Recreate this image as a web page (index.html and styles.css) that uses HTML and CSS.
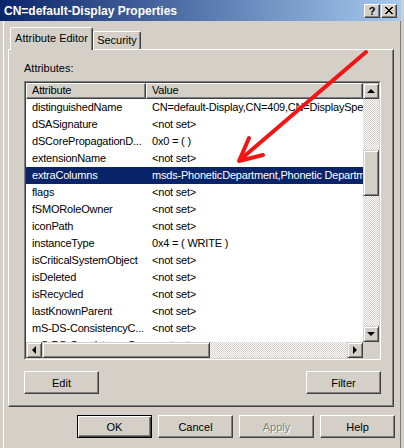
FILE: index.html
```html
<!DOCTYPE html>
<html lang="en">
  <head>
    <meta charset="UTF-8" />
    <title>CN=default-Display Properties</title>
    <link rel="stylesheet" href="styles.css">
  </head>
  <body>
    <div class="window">
      <div class="titlebar">
        <span class="title">CN=default-Display Properties</span>
        <div class="title-buttons">
          <div class="tbtn">?</div>
          <div class="tbtn">
            <svg width="8" height="7" viewBox="0 0 8 7" shape-rendering="crispEdges">
              <path d="M0 0h2v1h-2zM6 0h2v1h-2zM1 1h2v1h-2zM5 1h2v1h-2zM2 2h4v1h-4zM3 3h2v1h-2zM2 4h4v1h-4zM1 5h2v1h-2zM5 5h2v1h-2zM0 6h2v1h-2zM6 6h2v1h-2z" fill="#000"/>
            </svg>
          </div>
        </div>
      </div>
      <div class="body">
        <div class="tabs">
          <div class="tab active">Attribute Editor</div>
          <div class="tab">Security</div>
        </div>
        <div class="panel">
          <div class="label">Attributes:</div>
          <div class="listbox">
            <div class="listbox-inner">
              <div class="list">
                <div class="list-header">
                  <div class="hcell attr">Attribute</div>
                  <div class="hcell val">Value</div>
                </div>
                <div class="row"><div class="attr">distinguishedName</div><div class="val">CN=default-Display,CN=409,CN=DisplaySpecifiers,CN=Configuration</div></div>
                <div class="row"><div class="attr">dSASignature</div><div class="val">&lt;not set&gt;</div></div>
                <div class="row"><div class="attr">dSCorePropagationD...</div><div class="val">0x0 = ( )</div></div>
                <div class="row"><div class="attr">extensionName</div><div class="val">&lt;not set&gt;</div></div>
                <div class="row selected"><div class="attr">extraColumns</div><div class="val">msds-PhoneticDepartment,Phonetic Department,1,100,0</div></div>
                <div class="row"><div class="attr">flags</div><div class="val">&lt;not set&gt;</div></div>
                <div class="row"><div class="attr">fSMORoleOwner</div><div class="val">&lt;not set&gt;</div></div>
                <div class="row"><div class="attr">iconPath</div><div class="val">&lt;not set&gt;</div></div>
                <div class="row"><div class="attr">instanceType</div><div class="val">0x4 = ( WRITE )</div></div>
                <div class="row"><div class="attr">isCriticalSystemObject</div><div class="val">&lt;not set&gt;</div></div>
                <div class="row"><div class="attr">isDeleted</div><div class="val">&lt;not set&gt;</div></div>
                <div class="row"><div class="attr">isRecycled</div><div class="val">&lt;not set&gt;</div></div>
                <div class="row"><div class="attr">lastKnownParent</div><div class="val">&lt;not set&gt;</div></div>
                <div class="row"><div class="attr">mS-DS-ConsistencyC...</div><div class="val">&lt;not set&gt;</div></div>
                <div class="row"><div class="attr">mS-DS-ConsistencyG...</div><div class="val">&lt;not set&gt;</div></div>
              </div>
              <div class="vscroll">
                <div class="sbtn"><span class="arrow up"></span></div>
                <div class="track track-top"></div>
                <div class="thumb"></div>
                <div class="track track-rest"></div>
                <div class="sbtn"><span class="arrow down"></span></div>
              </div>
              <div class="hscroll">
                <div class="sbtn"><span class="arrow left"></span></div>
                <div class="thumb hthumb"></div>
                <div class="track track-rest"></div>
                <div class="sbtn"><span class="arrow right"></span></div>
              </div>
              <div class="corner"></div>
            </div>
          </div>
          <div class="panel-buttons">
            <div class="btn">Edit</div>
            <div class="btn">Filter</div>
          </div>
        </div>
        <div class="dialog-buttons">
          <div class="btn default">OK</div>
          <div class="btn">Cancel</div>
          <div class="btn disabled">Apply</div>
          <div class="btn">Help</div>
        </div>
      </div>
      <svg class="annotation" width="404" height="448" viewBox="0 0 404 448">
        <g stroke="#f31414" stroke-width="4" stroke-linecap="round" stroke-linejoin="round" fill="none">
          <path d="M366 52 L241 159"/>
          <path d="M249 138 L239 161 L263 155"/>
        </g>
      </svg>
    </div>
  </body>
</html>
```

FILE: styles.css
```css
* {
  box-sizing: border-box;
}
body {
  margin: 0;
  font-family: "Liberation Sans", Arial, sans-serif;
  font-size: 11px;
  color: #000;
  background: #d4d0c8;
}
.window {
  position: relative;
  width: 404px;
  height: 448px;
  overflow: hidden;
  background: #d4d0c8;
  box-shadow: inset 3px 0 #d4d0c8, inset 4px 0 #fff, inset -3px 0 #d4d0c8, inset -4px 0 #808080;
}
.titlebar {
  width: 401px;
  height: 21px;
  display: flex;
  align-items: center;
  justify-content: space-between;
  padding: 0 4px 0 4px;
  background: linear-gradient(to right, #0a246a, #a6caf0);
}
.title {
  color: #fff;
  font-weight: bold;
  font-size: 12px;
}
.title-buttons {
  display: flex;
  gap: 1px;
}
.tbtn {
  width: 16px;
  height: 14px;
  display: flex;
  align-items: center;
  justify-content: center;
  background: #d4d0c8;
  border: 1px solid;
  border-color: #fff #404040 #404040 #fff;
  box-shadow: inset -1px -1px #808080;
  font-weight: bold;
  font-size: 11px;
  line-height: 12px;
}
.body {
  padding: 6px 0 0 8px;
}
.tabs {
  position: relative;
  z-index: 1;
  display: flex;
  align-items: flex-start;
  height: 23px;
  margin-bottom: -1px;
  padding-left: 2px;
}
.tab {
  width: 48px;
  height: 18px;
  margin-top: 4px;
  text-align: center;
  line-height: 16px;
  background: #d4d0c8;
  border-top: 1px solid #fff;
  border-left: 1px solid #fff;
  border-right: 1px solid #404040;
  box-shadow: inset -1px 0 #808080;
  border-top-left-radius: 2px;
  border-top-right-radius: 2px;
}
.tab.active {
  width: 83px;
  height: 23px;
  margin-top: 0;
  line-height: 20px;
}
.panel {
  width: 386px;
  height: 358px;
  padding: 12px 0 0 15px;
  border: 1px solid;
  border-color: #fff #404040 #404040 #fff;
  box-shadow: inset -1px -1px #808080;
}
.label {
  line-height: 13px;
}
.listbox {
  width: 357px;
  height: 279px;
  margin-top: 6px;
  border: 1px solid;
  border-color: #808080 #fff #fff #808080;
}
.listbox-inner {
  height: 100%;
  border: 1px solid;
  border-color: #404040 #d4d0c8 #d4d0c8 #404040;
  display: grid;
  grid-template-columns: 1fr 16px;
  grid-template-rows: 1fr 16px;
}
.list {
  background: #fff;
  overflow: hidden;
  letter-spacing: -0.2px;
}
.list-header {
  display: flex;
  height: 16px;
}
.hcell {
  background: #d4d0c8;
  border: 1px solid;
  border-color: #fff #404040 #404040 #fff;
  box-shadow: inset -1px -1px #808080;
  padding-left: 5px;
  line-height: 13px;
}
.hcell.attr {
  width: 120px;
  flex: none;
}
.hcell.val {
  flex: 1;
}
.row {
  display: flex;
  height: 17px;
  line-height: 17px;
  white-space: nowrap;
}
.row .attr {
  width: 120px;
  flex: none;
  padding-left: 6px;
  overflow: hidden;
}
.row .val {
  padding-left: 6px;
  overflow: hidden;
}
.row.selected {
  background: #0a246a;
  color: #fff;
}
.vscroll {
  display: flex;
  flex-direction: column;
}
.hscroll {
  display: flex;
}
.sbtn,
.thumb {
  flex: none;
  background: #d4d0c8;
  border: 1px solid;
  border-color: #d4d0c8 #404040 #404040 #d4d0c8;
  box-shadow: inset 1px 1px #fff, inset -1px -1px #808080;
}
.sbtn {
  width: 16px;
  height: 16px;
  display: flex;
  align-items: center;
  justify-content: center;
}
.thumb {
  height: 46px;
}
.hthumb {
  width: 168px;
  height: 16px;
}
.track {
  background: repeating-conic-gradient(#fff 0 25%, #d4d0c8 0 50%) 0 0 / 2px 2px;
}
.track-top {
  height: 51px;
  flex: none;
}
.track-rest {
  flex: 1;
}
.corner {
  background: #d4d0c8;
}
.arrow {
  width: 0;
  height: 0;
  border: 4px solid transparent;
}
.arrow.up {
  border-top: none;
  border-bottom-color: #000;
}
.arrow.down {
  border-bottom: none;
  border-top-color: #000;
}
.arrow.left {
  border-left: none;
  border-right-color: #000;
}
.arrow.right {
  border-right: none;
  border-left-color: #000;
}
.panel-buttons {
  width: 357px;
  display: flex;
  justify-content: space-between;
  margin-top: 11px;
}
.btn {
  width: 75px;
  height: 23px;
  display: flex;
  align-items: center;
  justify-content: center;
  background: #d4d0c8;
  border: 1px solid;
  border-color: #fff #404040 #404040 #fff;
  box-shadow: inset -1px -1px #808080;
}
.btn.default {
  border-color: #000;
  box-shadow: inset 1px 1px #fff, inset -1px -1px #404040, inset -2px -2px #808080;
}
.btn.disabled {
  color: #808080;
  text-shadow: 1px 1px #fff;
}
.dialog-buttons {
  width: 387px;
  display: flex;
  justify-content: flex-end;
  gap: 6px;
  margin-top: 8px;
}
.annotation {
  position: absolute;
  top: 0;
  left: 0;
  pointer-events: none;
}
```
